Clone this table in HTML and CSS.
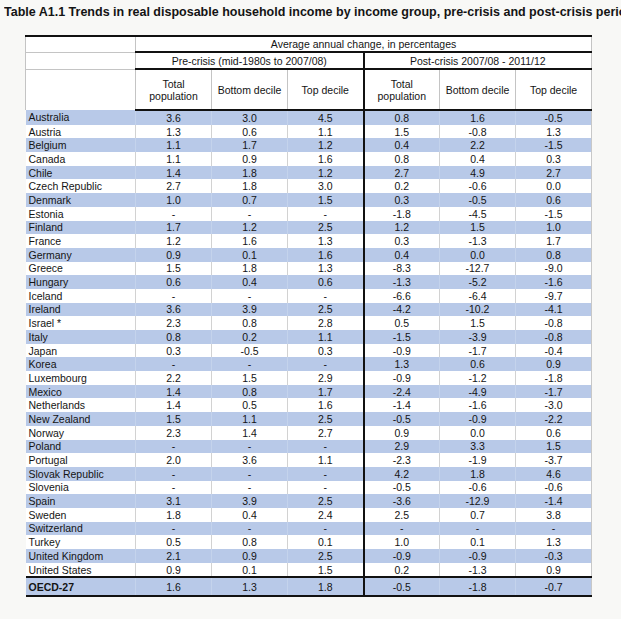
FILE: index.html
```html
<!DOCTYPE html>
<html>
<head>
<meta charset="utf-8">
<link rel="stylesheet" href="styles.css">
</head>
<body>
<div class="title">Table A1.1 Trends in real disposable household income by income group, pre-crisis and post-crisis periods</div>
<table class="tbl">
<colgroup><col class="c-name"><col class="c-num"><col class="c-num"><col class="c-num"><col class="c-num"><col class="c-num"><col class="c-num"></colgroup>
<thead>
<tr class="h1"><th class="hname"></th><th colspan="6" class="hspan">Average annual change, in percentages</th></tr>
<tr class="h2"><th class="hname"></th><th colspan="3" class="hspan">Pre-crisis (mid-1980s to 2007/08)</th><th colspan="3" class="hspan sep">Post-crisis 2007/08 - 2011/12</th></tr>
<tr class="h3"><th class="hname"></th><th class="hsub">Total<br>population</th><th class="hsub">Bottom decile</th><th class="hsub">Top decile</th><th class="hsub sep">Total<br>population</th><th class="hsub">Bottom decile</th><th class="hsub">Top decile</th></tr>
</thead>
<tbody>
<tr class="b"><td>Australia</td><td>3.6</td><td>3.0</td><td>4.5</td><td class="sep">0.8</td><td>1.6</td><td>-0.5</td></tr>
<tr><td>Austria</td><td>1.3</td><td>0.6</td><td>1.1</td><td class="sep">1.5</td><td>-0.8</td><td>1.3</td></tr>
<tr class="b"><td>Belgium</td><td>1.1</td><td>1.7</td><td>1.2</td><td class="sep">0.4</td><td>2.2</td><td>-1.5</td></tr>
<tr><td>Canada</td><td>1.1</td><td>0.9</td><td>1.6</td><td class="sep">0.8</td><td>0.4</td><td>0.3</td></tr>
<tr class="b"><td>Chile</td><td>1.4</td><td>1.8</td><td>1.2</td><td class="sep">2.7</td><td>4.9</td><td>2.7</td></tr>
<tr><td>Czech Republic</td><td>2.7</td><td>1.8</td><td>3.0</td><td class="sep">0.2</td><td>-0.6</td><td>0.0</td></tr>
<tr class="b"><td>Denmark</td><td>1.0</td><td>0.7</td><td>1.5</td><td class="sep">0.3</td><td>-0.5</td><td>0.6</td></tr>
<tr><td>Estonia</td><td>-</td><td>-</td><td>-</td><td class="sep">-1.8</td><td>-4.5</td><td>-1.5</td></tr>
<tr class="b"><td>Finland</td><td>1.7</td><td>1.2</td><td>2.5</td><td class="sep">1.2</td><td>1.5</td><td>1.0</td></tr>
<tr><td>France</td><td>1.2</td><td>1.6</td><td>1.3</td><td class="sep">0.3</td><td>-1.3</td><td>1.7</td></tr>
<tr class="b"><td>Germany</td><td>0.9</td><td>0.1</td><td>1.6</td><td class="sep">0.4</td><td>0.0</td><td>0.8</td></tr>
<tr><td>Greece</td><td>1.5</td><td>1.8</td><td>1.3</td><td class="sep">-8.3</td><td>-12.7</td><td>-9.0</td></tr>
<tr class="b"><td>Hungary</td><td>0.6</td><td>0.4</td><td>0.6</td><td class="sep">-1.3</td><td>-5.2</td><td>-1.6</td></tr>
<tr><td>Iceland</td><td>-</td><td>-</td><td>-</td><td class="sep">-6.6</td><td>-6.4</td><td>-9.7</td></tr>
<tr class="b"><td>Ireland</td><td>3.6</td><td>3.9</td><td>2.5</td><td class="sep">-4.2</td><td>-10.2</td><td>-4.1</td></tr>
<tr><td>Israel *</td><td>2.3</td><td>0.8</td><td>2.8</td><td class="sep">0.5</td><td>1.5</td><td>-0.8</td></tr>
<tr class="b"><td>Italy</td><td>0.8</td><td>0.2</td><td>1.1</td><td class="sep">-1.5</td><td>-3.9</td><td>-0.8</td></tr>
<tr><td>Japan</td><td>0.3</td><td>-0.5</td><td>0.3</td><td class="sep">-0.9</td><td>-1.7</td><td>-0.4</td></tr>
<tr class="b"><td>Korea</td><td>-</td><td>-</td><td>-</td><td class="sep">1.3</td><td>0.6</td><td>0.9</td></tr>
<tr><td>Luxembourg</td><td>2.2</td><td>1.5</td><td>2.9</td><td class="sep">-0.9</td><td>-1.2</td><td>-1.8</td></tr>
<tr class="b"><td>Mexico</td><td>1.4</td><td>0.8</td><td>1.7</td><td class="sep">-2.4</td><td>-4.9</td><td>-1.7</td></tr>
<tr><td>Netherlands</td><td>1.4</td><td>0.5</td><td>1.6</td><td class="sep">-1.4</td><td>-1.6</td><td>-3.0</td></tr>
<tr class="b"><td>New Zealand</td><td>1.5</td><td>1.1</td><td>2.5</td><td class="sep">-0.5</td><td>-0.9</td><td>-2.2</td></tr>
<tr><td>Norway</td><td>2.3</td><td>1.4</td><td>2.7</td><td class="sep">0.9</td><td>0.0</td><td>0.6</td></tr>
<tr class="b"><td>Poland</td><td>-</td><td>-</td><td>-</td><td class="sep">2.9</td><td>3.3</td><td>1.5</td></tr>
<tr><td>Portugal</td><td>2.0</td><td>3.6</td><td>1.1</td><td class="sep">-2.3</td><td>-1.9</td><td>-3.7</td></tr>
<tr class="b"><td>Slovak Republic</td><td>-</td><td>-</td><td>-</td><td class="sep">4.2</td><td>1.8</td><td>4.6</td></tr>
<tr><td>Slovenia</td><td>-</td><td>-</td><td>-</td><td class="sep">-0.5</td><td>-0.6</td><td>-0.6</td></tr>
<tr class="b"><td>Spain</td><td>3.1</td><td>3.9</td><td>2.5</td><td class="sep">-3.6</td><td>-12.9</td><td>-1.4</td></tr>
<tr><td>Sweden</td><td>1.8</td><td>0.4</td><td>2.4</td><td class="sep">2.5</td><td>0.7</td><td>3.8</td></tr>
<tr class="b"><td>Switzerland</td><td>-</td><td>-</td><td>-</td><td class="sep">-</td><td>-</td><td>-</td></tr>
<tr><td>Turkey</td><td>0.5</td><td>0.8</td><td>0.1</td><td class="sep">1.0</td><td>0.1</td><td>1.3</td></tr>
<tr class="b"><td>United Kingdom</td><td>2.1</td><td>0.9</td><td>2.5</td><td class="sep">-0.9</td><td>-0.9</td><td>-0.3</td></tr>
<tr><td>United States</td><td>0.9</td><td>0.1</td><td>1.5</td><td class="sep">0.2</td><td>-1.3</td><td>0.9</td></tr>
</tbody>
<tfoot>
<tr class="b total"><td class="tname">OECD-27</td><td>1.6</td><td>1.3</td><td>1.8</td><td class="sep">-0.5</td><td>-1.8</td><td>-0.7</td></tr>
</tfoot>
</table>
</body>
</html>
```
FILE: styles.css
```css
html, body {
  margin: 0;
  background: #f8f8f6;
  overflow: hidden;
}
body {
  font-family: "Liberation Sans", Arial, sans-serif;
  color: #141414;
}
.title {
  margin: 4px 0 0 4px;
  font-size: 12.5px;
  font-weight: bold;
  line-height: 16px;
  white-space: nowrap;
  overflow: hidden;
}
.tbl {
  margin: 15px 0 0 25px;
  border-collapse: collapse;
  table-layout: fixed;
  width: 566px;
  font-size: 10.5px;
  border-top: 2px solid #111;
}
.c-name { width: 110px; }
.c-num { width: 76px; }

.tbl th {
  font-weight: normal;
  background: #fff;
  padding: 0;
  line-height: 12px;
  text-align: center;
}
.hname {
  border-left: 1px solid #c4c4c4;
  border-right: 1px solid #c4c4c4;
  border-bottom: 1px solid #c4c4c4;
}
.h1 { height: 16px; }
.h2 { height: 17px; }
.h3 { height: 41px; }
.hspan {
  border-bottom: 2px solid #111;
  border-right: 1px solid #c4c4c4;
}
.hsub {
  border-right: 1px solid #c4c4c4;
  border-bottom: 2px solid #111;
}
.h3 .hname { border-bottom: none; }
.tbl th.sep, .tbl td.sep { border-left: 2px solid #111; }

.tbl td {
  padding: 0;
  height: 13.7px;
  line-height: 12px;
  text-align: center;
  background: #fff;
  border-right: 1px solid #d2d2d2;
}
.tbl td:first-child {
  text-align: left;
  padding-left: 3px;
}
.tbl tr.b td {
  background: #b8c9e8;
  border-right-color: #c4d3ec;
}
.tbl tr td:last-child { border-right: 1px solid #c8c8c8; }
.total td {
  height: 17px;
  border-top: 2px solid #111;
  border-bottom: 2px solid #111;
}
.tbl td.tname { font-weight: bold; }
```
